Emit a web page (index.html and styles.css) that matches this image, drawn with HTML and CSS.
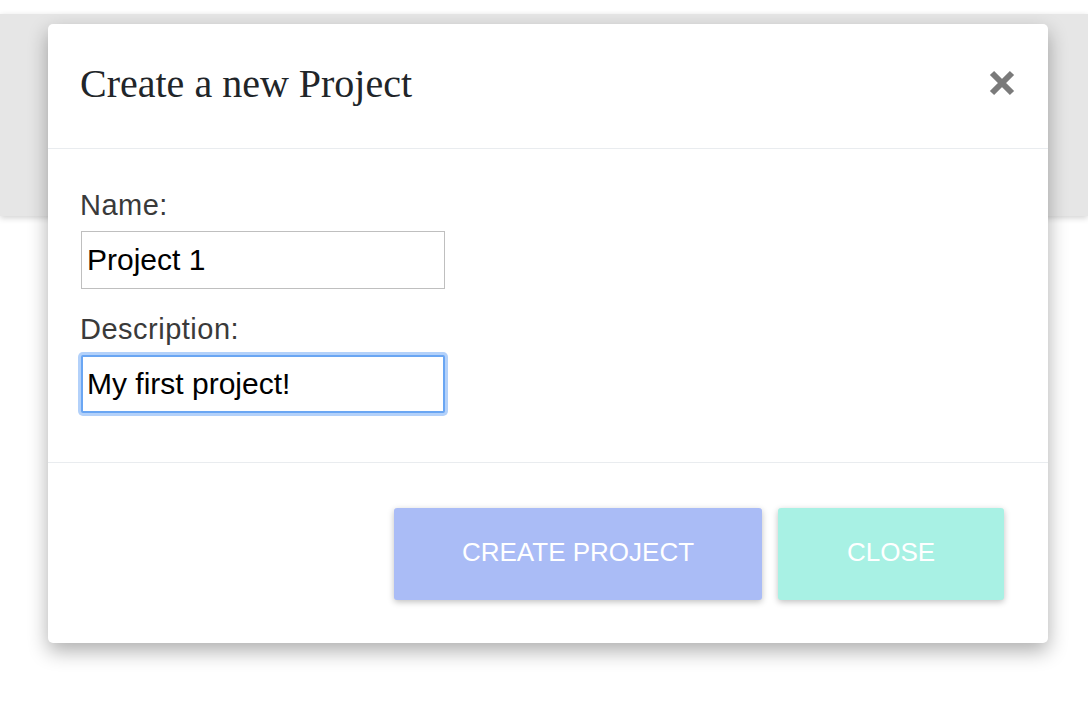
FILE: index.html
```html
<!DOCTYPE html>
<html lang="en">
<head>
<meta charset="utf-8">
<title>Create a new Project</title>
<link rel="stylesheet" href="styles.css">
</head>
<body>
<div class="topbar"></div>
<div class="modal">
  <div class="modal-header">
    <h1 class="modal-title">Create a new Project</h1>
    <button class="close-x" aria-label="Close">
      <svg width="26" height="26" viewBox="0 0 26 26"><path d="M3 3 L23 23 M23 3 L3 23" stroke="#7a7a7a" stroke-width="6" fill="none"/></svg>
    </button>
  </div>
  <div class="modal-body">
    <div class="form-group">
      <label class="label">Name:</label>
      <input class="field" type="text" value="Project 1">
    </div>
    <div class="form-group">
      <label class="label">Description:</label>
      <input class="field focused" type="text" value="My first project!">
    </div>
  </div>
  <div class="modal-footer">
    <button class="btn btn-create">CREATE PROJECT</button>
    <button class="btn btn-close">CLOSE</button>
  </div>
</div>
</body>
</html>
```

FILE: styles.css
```css
html, body {
  margin: 0;
  padding: 0;
  background: #ffffff;
  width: 1088px;
  height: 708px;
  overflow: hidden;
}
.topbar {
  margin-top: 14px;
  height: 202px;
  background: #e6e6e6;
  box-shadow: 0 2px 6px rgba(0,0,0,0.18);
}
.modal {
  position: absolute;
  left: 48px;
  top: 24px;
  width: 1000px;
  background: #fff;
  border-radius: 5px;
  box-shadow: 0 8px 20px rgba(0,0,0,0.32);
  display: flex;
  flex-direction: column;
}
.modal-header {
  display: flex;
  justify-content: space-between;
  align-items: center;
  padding: 36px 33px 40px 32px;
  border-bottom: 1px solid #e9ecef;
}
.modal-title {
  margin: 0;
  font-family: "Liberation Serif", "Times New Roman", serif;
  font-weight: normal;
  font-size: 40px;
  line-height: 48px;
  color: #212529;
}
.close-x {
  border: 0;
  background: none;
  padding: 0;
  width: 26px;
  height: 26px;
  display: flex;
  margin-top: -2px;
}
.modal-body {
  padding: 40px 32px 49px 32px;
  border-bottom: 1px solid #e9ecef;
}
.form-group + .form-group {
  margin-top: 24px;
}
.label {
  display: block;
  font-family: "Liberation Sans", Arial, sans-serif;
  font-size: 29px;
  line-height: 33px;
  letter-spacing: 0.5px;
  color: #3a3a3a;
}
.field {
  display: block;
  box-sizing: border-box;
  margin: 9px 0 0 1px;
  width: 364px;
  height: 58px;
  border: 1px solid #bfbfbf;
  padding: 0 5px;
  font-family: "Liberation Sans", Arial, sans-serif;
  font-size: 30px;
  color: #000;
  background: #fff;
  outline: none;
}
.field.focused {
  border: 2px solid #6aa6f3;
  border-radius: 2px;
  padding: 0 4px;
  box-shadow: 0 0 0 3px #b3d1fa;
}
.modal-footer {
  display: flex;
  justify-content: flex-end;
  gap: 16px;
  padding: 45px 44px 43px 32px;
}
.btn {
  height: 92px;
  border: 0;
  border-radius: 3px;
  padding: 0 0 4px 0;
  white-space: nowrap;
  font-family: "Liberation Sans", Arial, sans-serif;
  font-size: 26px;
  color: #fff;
  box-shadow: 0 2px 6px rgba(0,0,0,0.25);
}
.btn-create {
  width: 368px;
  background: #aabcf6;
}
.btn-close {
  width: 226px;
  background: #a8f1e4;
}
```
